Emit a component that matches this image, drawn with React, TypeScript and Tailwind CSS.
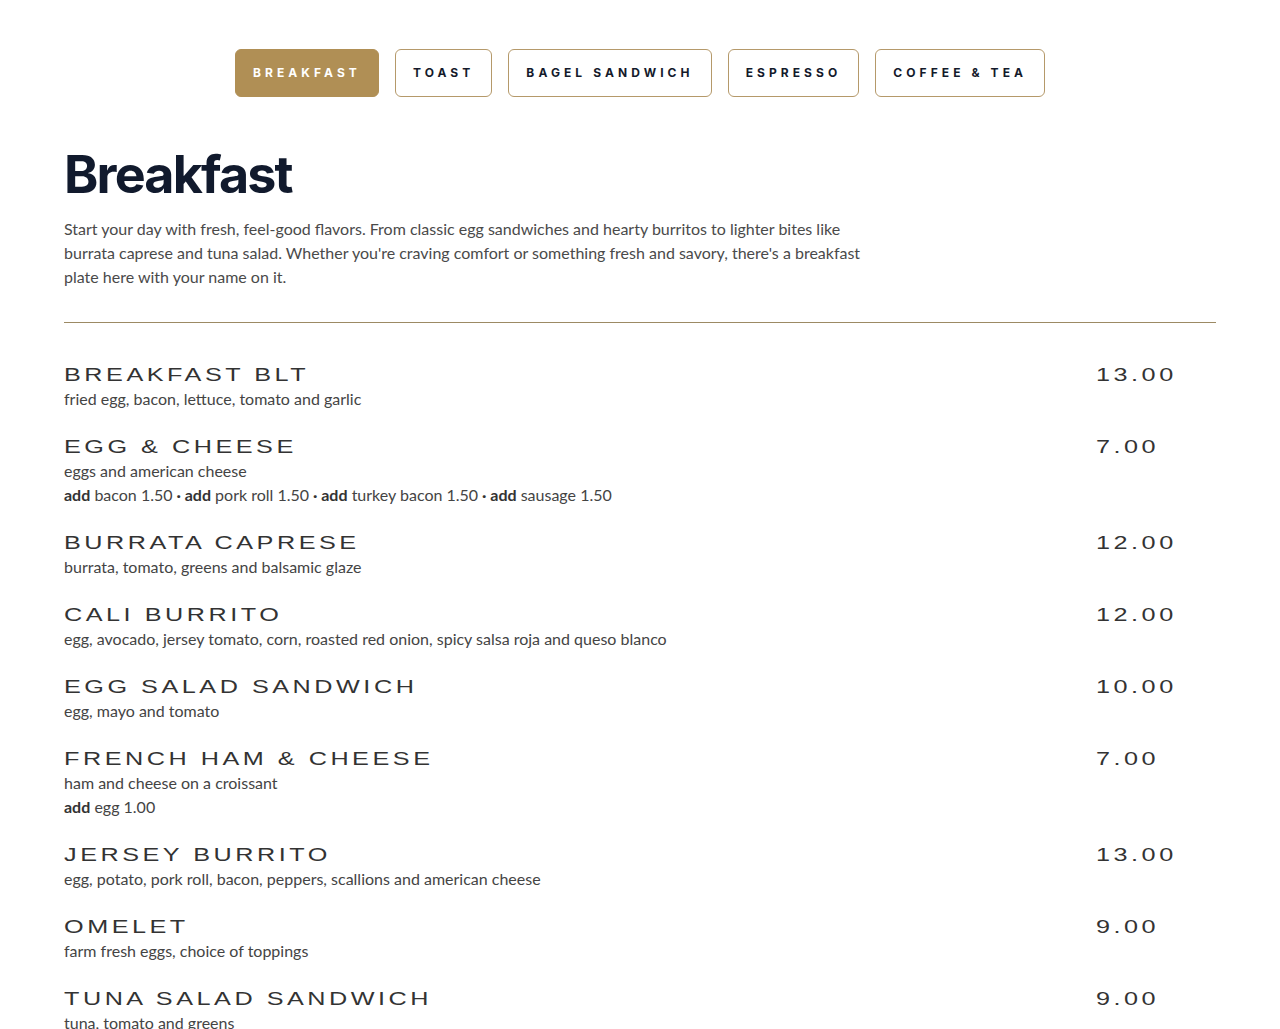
import React from "react";

const tabs = ["Breakfast", "Toast", "Bagel Sandwich", "Espresso", "Coffee & Tea"];

type Item = { name: string; price: string; desc: string; adds?: [string, string][] };

const items: Item[] = [
  { name: "Breakfast BLT", price: "13.00", desc: "fried egg, bacon, lettuce, tomato and garlic" },
  {
    name: "Egg & Cheese",
    price: "7.00",
    desc: "eggs and american cheese",
    adds: [
      ["bacon", "1.50"],
      ["pork roll", "1.50"],
      ["turkey bacon", "1.50"],
      ["sausage", "1.50"],
    ],
  },
  { name: "Burrata Caprese", price: "12.00", desc: "burrata, tomato, greens and balsamic glaze" },
  { name: "Cali Burrito", price: "12.00", desc: "egg, avocado, jersey tomato, corn, roasted red onion, spicy salsa roja and queso blanco" },
  { name: "Egg Salad Sandwich", price: "10.00", desc: "egg, mayo and tomato" },
  { name: "French Ham & Cheese", price: "7.00", desc: "ham and cheese on a croissant", adds: [["egg", "1.00"]] },
  { name: "Jersey Burrito", price: "13.00", desc: "egg, potato, pork roll, bacon, peppers, scallions and american cheese" },
  { name: "Omelet", price: "9.00", desc: "farm fresh eggs, choice of toppings" },
  { name: "Tuna Salad Sandwich", price: "9.00", desc: "tuna, tomato and greens" },
];

export default function App() {
  return (
    <div className="min-h-screen overflow-hidden bg-white px-16 pt-[49px] pb-16 font-['Lato',sans-serif]">
      <div className="flex justify-center gap-4">
        {tabs.map((t, i) => (
          <button
            key={t}
            className={
              i === 0
                ? "h-12 rounded-md border border-[#b08f55] bg-[#b08f55] px-[17px] font-['Inter',sans-serif] text-xs font-bold uppercase tracking-[0.34em] text-white"
                : "h-12 rounded-md border border-[#b5996a] bg-white px-[17px] font-['Inter',sans-serif] text-xs font-bold uppercase tracking-[0.34em] text-[#141a2b]"
            }
          >
            {t}
          </button>
        ))}
      </div>

      <h1 className="mt-[52px] font-['Inter',sans-serif] text-[52px] font-bold leading-none tracking-[-0.035em] text-[#111a2d]">
        Breakfast
      </h1>
      <p className="mt-4 max-w-[800px] text-base leading-6 text-[#4a4a4a]">
        Start your day with fresh, feel-good flavors. From classic egg sandwiches and hearty burritos to lighter bites like burrata
        caprese and tuna salad. Whether you're craving comfort or something fresh and savory, there's a breakfast plate here with your
        name on it.
      </p>

      <div className="mt-[33px] h-px bg-[#9c8a64]" />

      <div className="mt-10 flex flex-col gap-6">
        {items.map((it) => (
          <div key={it.name} className="flex">
            <div className="flex-1">
              <div className="h-6 w-max origin-left scale-x-[1.4] font-['Liberation_Sans',sans-serif] text-[18px] uppercase leading-6 tracking-[0.14em] text-[#333333]">
                {it.name}
              </div>
              <div className="text-base leading-6 text-[#444444]">{it.desc}</div>
              {it.adds && (
                <div className="text-base leading-6 text-[#444444]">
                  {it.adds.map(([n, p], i) => (
                    <span key={n}>
                      {i > 0 && <b className="font-bold text-[#333333]"> · </b>}
                      <b className="font-bold text-[#333333]">add</b> {n} {p}
                    </span>
                  ))}
                </div>
              )}
            </div>
            <div className="w-[120px]">
              <div className="h-6 w-max origin-left scale-x-[1.4] font-['Liberation_Sans',sans-serif] text-[18px] leading-6 tracking-[0.14em] text-[#333333]">
                {it.price}
              </div>
            </div>
          </div>
        ))}
      </div>
    </div>
  );
}
